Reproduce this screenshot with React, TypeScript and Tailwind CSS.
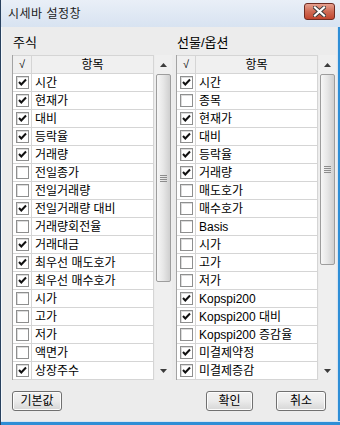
const stockItems: [string, boolean][] = [
  ["시간", true],
  ["현재가", true],
  ["대비", true],
  ["등락율", true],
  ["거래량", true],
  ["전일종가", false],
  ["전일거래량", false],
  ["전일거래량 대비", true],
  ["거래량회전율", false],
  ["거래대금", true],
  ["최우선 매도호가", true],
  ["최우선 매수호가", true],
  ["시가", false],
  ["고가", false],
  ["저가", false],
  ["액면가", false],
  ["상장주수", true],
];

const futureItems: [string, boolean][] = [
  ["시간", true],
  ["종목", false],
  ["현재가", true],
  ["대비", true],
  ["등락율", true],
  ["거래량", true],
  ["매도호가", false],
  ["매수호가", false],
  ["Basis", false],
  ["시가", false],
  ["고가", false],
  ["저가", false],
  ["Kopspi200", true],
  ["Kopspi200 대비", true],
  ["Kopspi200 증감율", false],
  ["미결제약정", true],
  ["미결제증감", true],
];

function CheckBox({ checked }: { checked: boolean }) {
  return (
    <div className="w-[13px] h-[13px] border border-[#8e8f8f] bg-white shadow-[inset_1px_1px_0_#dcdcdc] flex items-center justify-center">
      {checked && (
        <svg width="9" height="9" viewBox="0 0 9 9">
          <path d="M1 4 L3.3 6.5 L8 1.5" fill="none" stroke="#111" strokeWidth="2" />
        </svg>
      )}
    </div>
  );
}

function ScrollBar({ thumb }: { thumb: string }) {
  return (
    <div className="w-[17px] flex flex-col bg-[#efefef]">
      <div className="h-[19px] shrink-0 flex items-center justify-center">
        <svg width="7" height="4" viewBox="0 0 7 4">
          <path d="M3.5 0 L7 4 L0 4 Z" fill="#3c3c3c" />
        </svg>
      </div>
      <div className="flex-1 flex flex-col">
        <div className={`${thumb} mx-px rounded-[2px] border border-[#9d9d9d] bg-gradient-to-r from-[#f7f7f7] via-[#e6e6e6] to-[#cfcfcf] flex flex-col items-center justify-center gap-px`}>
          <div className="w-[7px] h-px bg-[#8c8c8c]" />
          <div className="w-[7px] h-px bg-[#8c8c8c]" />
          <div className="w-[7px] h-px bg-[#8c8c8c]" />
          <div className="w-[7px] h-px bg-[#8c8c8c]" />
        </div>
      </div>
      <div className="h-[18px] shrink-0 flex items-center justify-center">
        <svg width="7" height="4" viewBox="0 0 7 4">
          <path d="M0 0 L7 0 L3.5 4 Z" fill="#3c3c3c" />
        </svg>
      </div>
    </div>
  );
}

function ItemList({ items, thumb }: { items: [string, boolean][]; thumb: string }) {
  return (
    <div className="flex h-[325px] gap-px">
      <div className="w-[142px] flex flex-col overflow-hidden border-l border-[#a3a3a3] bg-white">
        <div className="flex h-[19px] shrink-0 bg-[#f0f0f0] border-t border-b border-[#d5d5d5]">
          <div className="w-[19px] flex items-center justify-center border-r border-[#d5d5d5] text-[11px]">√</div>
          <div className="flex-1 flex items-center justify-center border-r border-[#d5d5d5]">항목</div>
        </div>
        {items.map(([name, checked]) => (
          <div key={name} className="flex h-[18px] shrink-0 border-b border-[#d5d5d5]">
            <div className="w-[19px] flex items-center justify-center border-r border-[#d5d5d5]">
              <CheckBox checked={checked} />
            </div>
            <div className="flex-1 flex items-center pl-[3px] border-r border-[#d5d5d5] whitespace-nowrap">{name}</div>
          </div>
        ))}
      </div>
      <ScrollBar thumb={thumb} />
    </div>
  );
}

function Button({ label, width }: { label: string; width: string }) {
  return (
    <div className={`${width} h-[20px] rounded-[3px] border border-[#707070] bg-gradient-to-b from-[#f2f2f2] via-[#ebebeb] to-[#d6d6d6] shadow-[inset_0_0_0_1px_#fcfcfc] flex items-center justify-center`}>
      {label}
    </div>
  );
}

export default function App() {
  return (
    <div className="w-[340px] h-[425px] flex flex-col bg-[#dde7f3] border-l border-[#29415e] text-[12px] text-black font-['Liberation_Sans','Noto_Sans_CJK_KR',sans-serif]">
      <div className="h-[27px] shrink-0 flex items-center justify-between pl-[7px] pr-[5px] bg-gradient-to-b from-[#e9eff7] to-[#d8e3f1]">
        <span className="text-[#1b1b1b] tracking-[0.5px]">시세바 설정창</span>
        <div className="w-[31px] h-[17px] -mt-[4px] rounded-[3px] border border-[#6e2c22] bg-gradient-to-b from-[#e6a08f] via-[#cf6b55] to-[#c2452e] flex items-center justify-center">
          <svg width="13" height="11" viewBox="0 0 13 11">
            <path d="M2 1.5 L11 9.5 M11 1.5 L2 9.5" stroke="#3a3a3a" strokeWidth="4" strokeLinecap="square" />
            <path d="M2 1.5 L11 9.5 M11 1.5 L2 9.5" stroke="#ffffff" strokeWidth="2.2" strokeLinecap="square" />
          </svg>
        </div>
      </div>
      <div className="flex-1 flex">
        <div className="w-[2px] bg-[#f4f8fc]" />
        <div className="flex-1 flex flex-col bg-[#ececec] pl-[10px] pr-[1px] pt-[8px]">
          <div className="flex gap-[4px]">
            <div className="w-[160px] flex flex-col">
              <div className="h-[16px] leading-[16px] mb-[4px] text-[13px] pl-px">주식</div>
              <ItemList items={stockItems} thumb="h-[208px]" />
            </div>
            <div className="w-[160px] flex flex-col">
              <div className="h-[16px] leading-[16px] mb-[4px] text-[13px] pl-px">선물/옵션</div>
              <ItemList items={futureItems} thumb="h-[191px]" />
            </div>
          </div>
          <div className="flex justify-between mt-[11px] pr-[10px]">
            <Button label="기본값" width="w-[50px]" />
            <div className="flex gap-[23px]">
              <Button label="확인" width="w-[47px]" />
              <Button label="취소" width="w-[50px]" />
            </div>
          </div>
        </div>
        <div className="w-[3px] flex">
          <div className="w-px bg-[#d6e4f2]" />
          <div className="w-[2px] bg-[#2e8ed6]" />
        </div>
      </div>
      <div className="h-[4px] shrink-0 flex flex-col">
        <div className="h-px bg-[#d6e4f2]" />
        <div className="h-[3px] bg-[#2e8ed6]" />
      </div>
    </div>
  );
}
